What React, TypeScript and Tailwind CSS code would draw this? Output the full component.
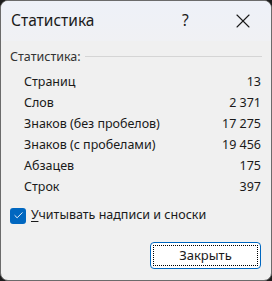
import { Check, X } from 'lucide-react';

const stats = [
  { label: 'Страниц', value: '13' },
  { label: 'Слов', value: '2 371' },
  { label: 'Знаков (без пробелов)', value: '17 275' },
  { label: 'Знаков (с пробелами)', value: '19 456' },
  { label: 'Абзацев', value: '175' },
  { label: 'Строк', value: '397' },
];

export default function App() {
  return (
    <div className="w-[272px] h-[281px] bg-[#1c1c1c] overflow-hidden" style={{ fontFamily: '"Noto Sans", "Open Sans", sans-serif' }}>
      <div className="w-full h-full rounded-[8px] border border-[#6b6b6b] bg-[#f0f0f0] overflow-hidden flex flex-col text-[#1a1a1a]">
        {/* title bar */}
        <div className="h-[40px] shrink-0 bg-gradient-to-b from-[#eef1f8] to-[#f0f1f4] flex items-center pl-[10px]">
          <span className="text-[15.5px] leading-none flex-1">Статистика</span>
          <span className="text-[15.5px] leading-none w-[12px] mr-[37px]">?</span>
          <X className="w-[24px] h-[24px] mr-[16px]" strokeWidth={1.1} />
        </div>

        {/* body */}
        <div className="flex-1 flex flex-col px-[9px] text-[12.5px] leading-none">
          <div className="flex items-center gap-[4px] mt-[10px]">
            <span className="text-[#333]">Статистика:</span>
            <div className="flex-1 h-px bg-[#d5d5d5] mt-[-2px]" />
          </div>

          <div className="flex flex-col pl-[14px] pr-px mt-[8px]">
            {stats.map((s) => (
              <div key={s.label} className="h-[21px] flex items-center justify-between">
                <span>{s.label}</span>
                <span>{s.value}</span>
              </div>
            ))}
          </div>

          <div className="flex items-center gap-[5px] mt-[10px]">
            <div className="w-[16px] h-[16px] rounded-[3px] bg-[#0067c0] flex items-center justify-center">
              <Check className="w-[11px] h-[11px] text-white" strokeWidth={2} />
            </div>
            <span>
              <span className="underline underline-offset-2">У</span>читывать надписи и сноски
            </span>
          </div>

          <div className="flex justify-end mt-[18px] pr-[1px]">
            <button className="w-[111px] h-[27px] rounded-[4px] border border-[#0067c0] bg-white p-[2px]">
              <div className="w-full h-full border border-dotted border-black flex items-center justify-center text-[13px]">
                Закрыть
              </div>
            </button>
          </div>
        </div>
      </div>
    </div>
  );
}
